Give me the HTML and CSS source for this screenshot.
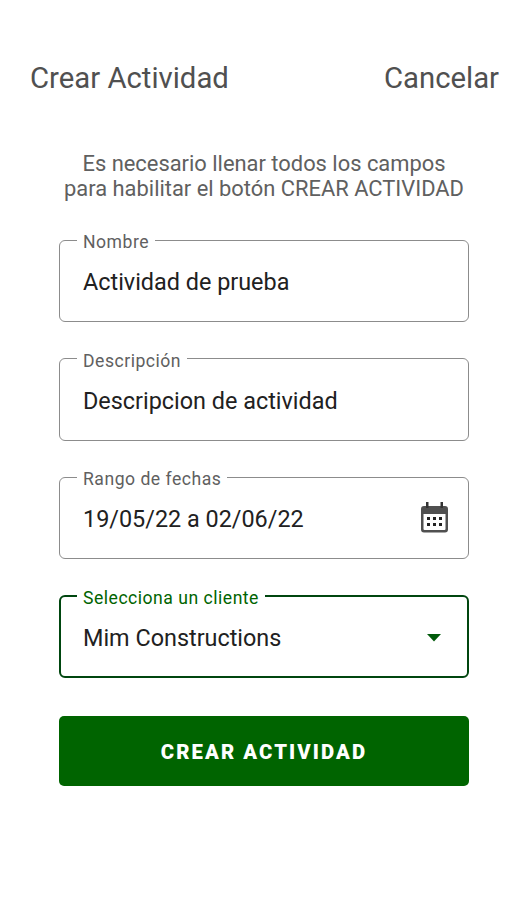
FILE: index.html
```
<!DOCTYPE html>
<html lang="es">
<head>
    <meta charset="UTF-8">
    <meta name="viewport" content="width=device-width, initial-scale=1.0">
    <title>Crear Actividad</title>
    <link rel="stylesheet" href="styles.css">
</head>
<body>
    <header class="top-bar">
        <h1 class="title">Crear Actividad</h1>
        <a class="cancel" href="#">Cancelar</a>
    </header>

    <form class="activity-form">
        <p class="hint">
            Es necesario llenar todos los campos<br>
            para habilitar el botón CREAR ACTIVIDAD
        </p>

        <fieldset class="field">
            <legend>Nombre</legend>
            <span class="value">Actividad de prueba</span>
        </fieldset>

        <fieldset class="field">
            <legend>Descripción</legend>
            <span class="value">Descripcion de actividad</span>
        </fieldset>

        <fieldset class="field">
            <legend>Rango de fechas</legend>
            <span class="value">19/05/22 a 02/06/22</span>
            <svg class="calendar" viewBox="0 0 27 31" width="27" height="31">
                <path fill="#505050" fill-rule="evenodd" d="M3 4h21a3 3 0 0 1 3 3v20.500a3 3 0 0 1-3 3H3a3 3 0 0 1-3-3V7a3 3 0 0 1 3-3zM2.500 12v15q0 1 1 1h20q1 0 1-1V12z"/>
                <path fill="#333" d="M5 0h2.500v6H5zM19.500 0H22v6h-2.500z"/>
                <path fill="#222" d="M6 15h3v3H6zM12 15h3v3h-3zM18 15h3v3h-3zM6 21h3v3H6zM12 21h3v3h-3zM18 21h3v3h-3z"/>
            </svg>
        </fieldset>

        <fieldset class="field focused">
            <legend>Selecciona un cliente</legend>
            <span class="value">Mim Constructions</span>
            <svg class="arrow" viewBox="0 0 14 8" width="14" height="8">
                <path fill="#005a0a" d="M0 0h14L7 7.500z"/>
            </svg>
        </fieldset>

        <button class="submit" type="button">CREAR ACTIVIDAD</button>
    </form>
</body>
</html>
```
FILE: styles.css
```
body {
    font-family: Roboto, sans-serif;
    margin: 0;
    background-color: #fff;
    color: #212121;
}

.top-bar {
    display: flex;
    justify-content: space-between;
    padding: 60px 28px 0 30px;
    height: 36px;
    line-height: 36px;
}

.title,
.cancel {
    margin: 0;
    font-size: 29.3px;
    font-weight: 400;
    color: #505050;
    text-decoration: none;
}

.activity-form {
    padding: 55px 58px 0 59px;
}

.hint {
    margin: 0 -20px 31px;
    font-size: 21.9px;
    line-height: 25px;
    text-align: center;
    color: #606060;
}

.field {
    display: flex;
    box-sizing: border-box;
    height: 90px;
    min-width: 0;
    margin: 0 0 28.7px;
    padding: 0 20px 0 23px;
    border: 1px solid #8c8c8c;
    border-radius: 6px;
}

.field legend {
    height: 16px;
    margin-left: -6px;
    padding: 0 6px;
    font-size: 17.6px;
    line-height: 20px;
    letter-spacing: 0.5px;
    color: #606060;
}

.value {
    font-size: 23.4px;
    line-height: 28px;
    padding-top: 20px;
}

.calendar {
    margin: 17px 0 0 auto;
}

.arrow {
    margin: 30px 7px 0 auto;
}

/* Currently selected field */
.field.focused {
    margin-bottom: 38px;
    padding: 0 19px 0 22px;
    border: 2px solid #00460f;
}

.field.focused legend {
    color: #006400;
}

.submit {
    display: block;
    width: 100%;
    height: 70px;
    padding: 2px 0 0;
    border: none;
    border-radius: 5px;
    background-color: #006400;
    color: #fff;
    font-family: inherit;
    font-size: 20.3px;
    font-weight: 900;
    letter-spacing: 2.1px;
}
```
